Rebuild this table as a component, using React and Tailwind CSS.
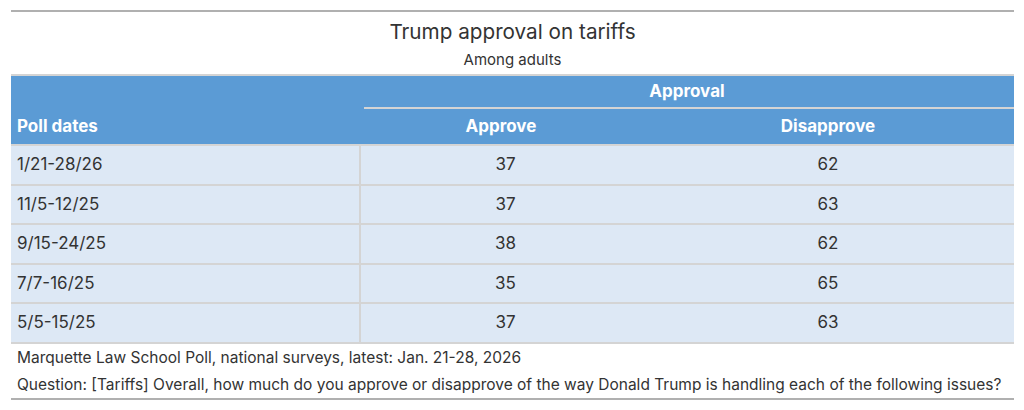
export default function App() {
  const rows = [
    ["1/21-28/26", "37", "62"],
    ["11/5-12/25", "37", "63"],
    ["9/15-24/25", "38", "62"],
    ["7/7-16/25", "35", "65"],
    ["5/5-15/25", "37", "63"],
  ];
  return (
    <div className="w-[1024px] h-[410px] bg-white pt-[10px] px-[11px]" style={{ fontFamily: "Inter, 'Liberation Sans', sans-serif" }}>
      <div className="w-[1003px] border-t-2 border-b-2 border-[#b0b0b0]">
        <div className="text-center text-[20.7px] leading-[26px] text-[#333] pt-[7px]">Trump approval on tariffs</div>
        <div className="text-center text-[15px] leading-[18px] text-[#333] pt-[6px] pb-[5px]">Among adults</div>
        <table className="w-full border-collapse">
          <thead className="bg-[#5b9bd5] text-white font-bold text-[17px]">
            <tr className="border-t-2 border-[#d4d4d4]">
              <th className="w-[349px] h-[35px]"></th>
              <th colSpan={2} className="h-[35px] pt-[4px] font-bold">
                <div className="flex flex-col items-center">
                  <span className="leading-[20px] mb-[6px]">Approval</span>
                  <div className="self-stretch ml-[4px] h-[2px] bg-[#d4d4d4]"></div>
                </div>
              </th>
            </tr>
            <tr className="border-b-2 border-[#d4d4d4]">
              <th className="text-left pl-[6px] h-[35px] pb-[1px]">Poll dates</th>
              <th className="w-[282px] text-center h-[35px] pb-[1px]">Approve</th>
              <th className="text-center h-[35px] pb-[1px]">Disapprove</th>
            </tr>
          </thead>
          <tbody className="bg-[#dde8f5] text-[#333] text-[17px]">
            {rows.map((r, i) => (
              <tr key={i} className="border-b-2 border-[#d4d4d4]">
                <td className="h-[39.5px] pl-[6px] border-r-2 border-[#d4d4d4]">{r[0]}</td>
                <td className="h-[39.5px] text-center pl-[8px]">{r[1]}</td>
                <td className="h-[39.5px] text-center">{r[2]}</td>
              </tr>
            ))}
          </tbody>
        </table>
        <div className="text-[15.5px] text-[#333] pl-[6px] leading-[27px]">
          <div>Marquette Law School Poll, national surveys, latest: Jan. 21-28, 2026</div>
          <div>Question: [Tariffs] Overall, how much do you approve or disapprove of the way Donald Trump is handling each of the following issues?</div>
        </div>
      </div>
    </div>
  );
}
